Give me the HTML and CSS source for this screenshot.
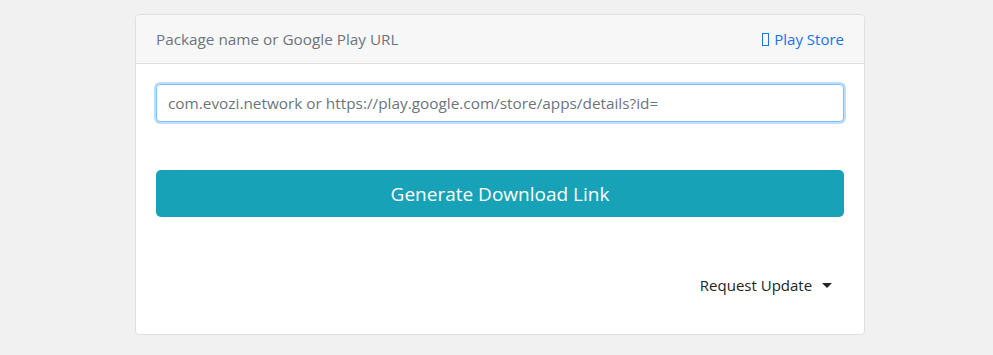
FILE: index.html
```html
<!DOCTYPE html>
<html lang="en">
<head>
    <meta charset="UTF-8">
    <meta name="viewport" content="width=device-width, initial-scale=1.0">
    <title>APK Downloader</title>
    <link rel="stylesheet" href="styles.css">
</head>
<body>
    <div class="card">
        <div class="card-header">
            <span class="header-title">Package name or Google Play URL</span>
            <a href="#" class="store-link"><span class="tofu"></span> Play Store</a>
        </div>
        <div class="card-body">
            <input type="text" class="form-control" placeholder="com.evozi.network or https://play.google.com/store/apps/details?id=">
            <button class="btn-generate">Generate Download Link</button>
            <div class="update-row">
                <a href="#" class="dropdown-toggle">Request Update <span class="caret"></span></a>
            </div>
        </div>
    </div>
</body>
</html>
```

FILE: styles.css
```css
body {
    font-family: "Open Sans", "Noto Sans", sans-serif;
    background-color: #f1f1f1;
    margin: 0;
    padding: 14px 0 0 7px;
}

.card {
    width: 730px;
    margin: 0 auto;
    background-color: white;
    border: 1px solid #dfdfdf;
    border-radius: 4px;
    box-sizing: border-box;
}

.card-header {
    display: flex;
    justify-content: space-between;
    align-items: center;
    height: 48px;
    padding: 0 20px;
    background-color: #f7f7f7;
    border-bottom: 1px solid #dfdfdf;
    border-radius: 4px 4px 0 0;
    font-size: 15px;
}

.header-title {
    color: #6c757d;
    font-size: 15.3px;
}

.store-link {
    color: #1a73e8;
    text-decoration: none;
}

.tofu {
    display: inline-block;
    width: 5px;
    height: 11px;
    border: 1px solid #1a73e8;
    vertical-align: -1px;
    margin-right: 1px;
}

.card-body {
    padding: 20px 20px 39px;
}

.form-control {
    display: block;
    width: 100%;
    height: 38px;
    box-sizing: border-box;
    padding: 6px 11px;
    font-family: inherit;
    font-size: 15.35px;
    color: #495057;
    border: 1px solid #80bdff;
    border-radius: 4px;
    outline: none;
    box-shadow: 0 0 0 2px rgba(0, 123, 255, 0.25);
}

.form-control::placeholder {
    color: #6c757d;
}

.btn-generate {
    display: block;
    width: 100%;
    height: 47px;
    margin-top: 48px;
    font-family: inherit;
    font-size: 19px;
    color: white;
    background-color: #17a2b8;
    border: none;
    border-radius: 5px;
    cursor: pointer;
}

.update-row {
    display: flex;
    justify-content: flex-end;
    margin-top: 58px;
    padding-right: 12px;
}

.dropdown-toggle {
    color: #212529;
    text-decoration: none;
    font-size: 15px;
}

.caret {
    display: inline-block;
    margin-left: 6px;
    vertical-align: 3px;
    border-top: 5px solid #212529;
    border-left: 5px solid transparent;
    border-right: 5px solid transparent;
}
```
